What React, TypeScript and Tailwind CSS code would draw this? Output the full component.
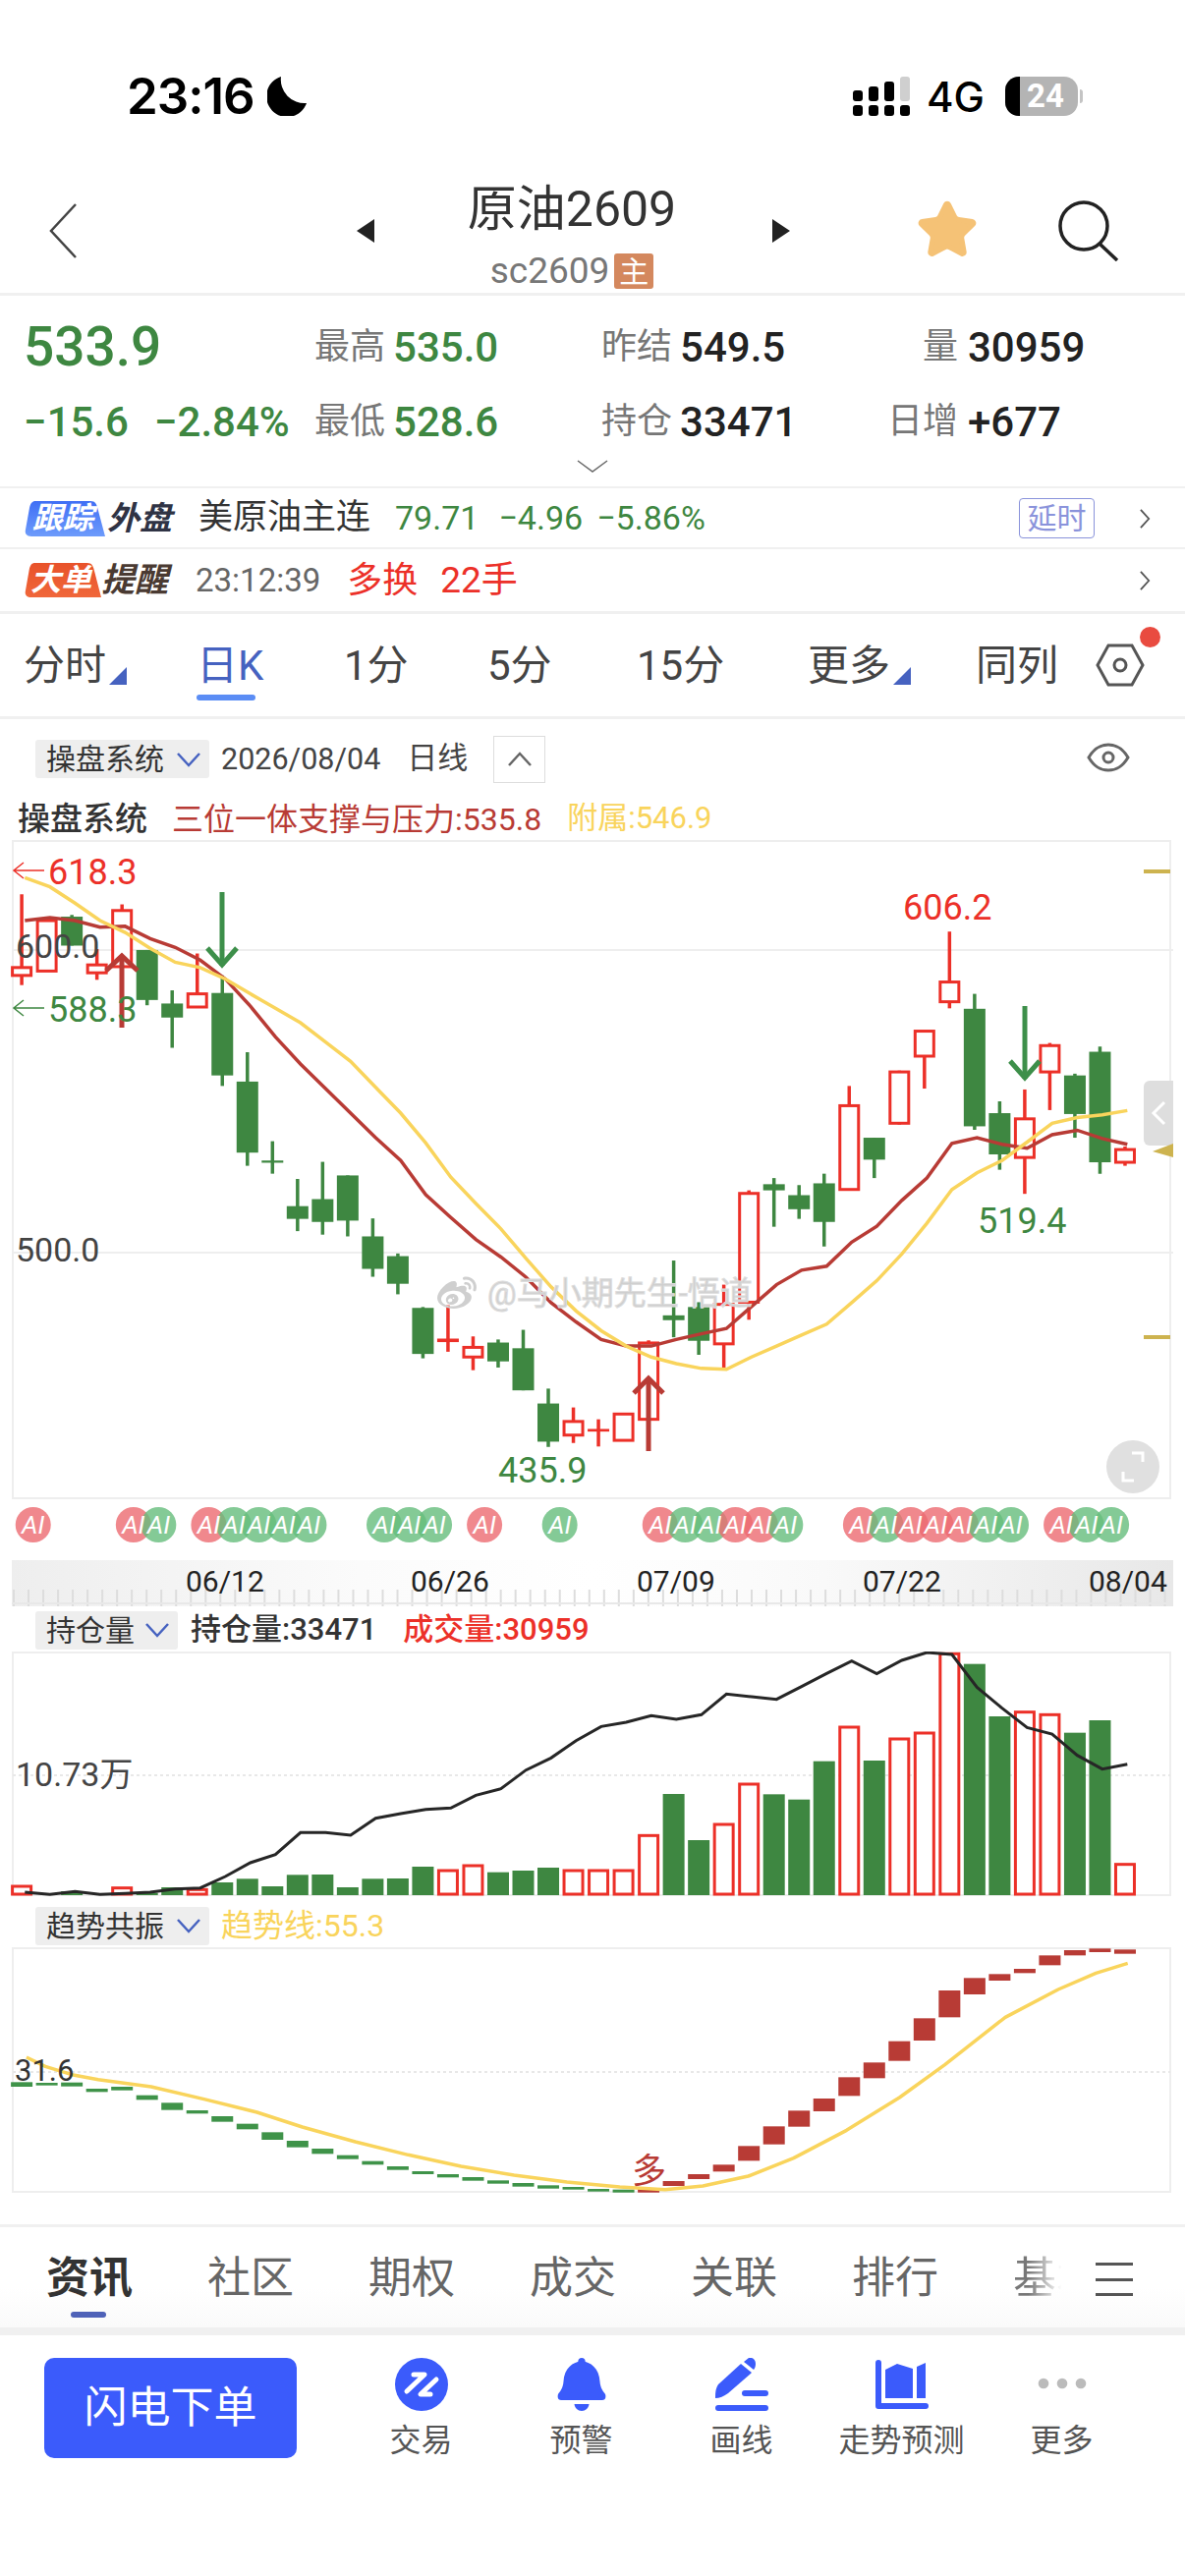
import React from "react";
import { Star } from "lucide-react";
import { FaWeibo } from "react-icons/fa";

const GREEN = "#3e8741";
const RED = "#ec3028";
const BRICK = "#b83b35";
const YELLOW = "#f9d45c";

// y values below were read off the chart, Y() maps them to page pixels
const Y = (z: number) => 850 + z / 2.24;
const VY = (z: number) => 1530 + z / 3;
const TY = (z: number) => 1930 + z / 3;
const cx = (i: number) => 22.1 + 25.52 * i;
const lx = (i: number) => 25.3 + 25.5 * i;
const aiX = (i: number) => 22 + 25.52 * (i + 0.46);

type Candle = ["r" | "g", number, number, number, number];

const CANDLES: Candle[] = [
  ["r", 135, 302, 320, 342], ["r", 195, 195, 310, 310], ["g", 182, 186, 252, 252], ["r", 260, 296, 314, 330],
  ["r", 158, 172, 300, 300], ["g", 262, 262, 376, 388], ["g", 354, 384, 416, 485], ["r", 270, 362, 392, 394],
  ["g", 320, 360, 548, 572], ["g", 495, 562, 724, 754], ["g", 698, 742, 747, 772], ["g", 784, 846, 875, 903],
  ["g", 745, 830, 882, 911], ["g", 776, 776, 879, 915], ["g", 874, 915, 989, 1007], ["g", 954, 960, 1023, 1047],
  ["g", 1076, 1078, 1183, 1193], ["r", 1072, 1148, 1156, 1178], ["r", 1143, 1168, 1190, 1220], ["g", 1150, 1157, 1200, 1214],
  ["g", 1128, 1170, 1266, 1266], ["g", 1262, 1296, 1383, 1395], ["r", 1305, 1337, 1368, 1386], ["r", 1332, 1354, 1360, 1394],
  ["r", 1320, 1320, 1380, 1380], ["r", 1152, 1158, 1332, 1332], ["g", 970, 1095, 1106, 1145], ["g", 1065, 1076, 1153, 1185],
  ["r", 1025, 1070, 1160, 1215], ["r", 810, 817, 1065, 1105], ["g", 782, 796, 810, 893], ["g", 798, 821, 853, 875],
  ["g", 772, 794, 882, 938], ["r", 572, 617, 808, 810], ["g", 690, 690, 740, 782], ["r", 537, 540, 657, 660],
  ["r", 447, 447, 504, 578], ["r", 220, 335, 380, 395], ["g", 362, 396, 664, 672], ["g", 607, 634, 728, 763],
  ["r", 580, 647, 735, 818], ["r", 474, 480, 540, 627], ["g", 544, 548, 636, 690], ["g", 482, 494, 746, 772],
  ["r", 710, 717, 746, 754],
];

const MA_RED = [195, 188, 195, 210, 208, 236, 256, 285, 328, 390, 460, 522, 578, 634, 690, 742, 820, 872, 922, 962, 1008, 1066, 1110, 1150, 1165, 1165, 1150, 1137, 1125, 1075, 1025, 992, 983, 928, 892, 833, 782, 703, 690, 705, 714, 683, 673, 692, 705];
const MA_YELLOW = [97, 118, 155, 195, 222, 258, 290, 302, 328, 362, 395, 428, 472, 516, 575, 634, 702, 780, 840, 898, 965, 1030, 1085, 1130, 1165, 1190, 1205, 1216, 1218, 1190, 1165, 1140, 1115, 1066, 1016, 955, 885, 808, 770, 742, 700, 657, 644, 638, 628];
const OI_LINE = [1188, 1195, 1186, 1195, 1192, 1188, 1178, 1175, 1140, 1098, 1073, 1006, 1006, 1014, 962, 948, 935, 931, 892, 872, 815, 778, 725, 682, 669, 649, 660, 646, 583, 591, 599, 560, 520, 482, 521, 480, 456, 462, 562, 626, 685, 705, 770, 812, 797];

const VOLUME: ["r" | "g", number][] = [
  ["r", 1170], ["r", 1195], ["g", 1185], ["r", 1195], ["r", 1175], ["g", 1190], ["g", 1173], ["r", 1180], ["g", 1158],
  ["g", 1147], ["g", 1170], ["g", 1135], ["g", 1134], ["g", 1173], ["g", 1147], ["g", 1146], ["g", 1110], ["r", 1122],
  ["r", 1107], ["g", 1127], ["g", 1122], ["g", 1113], ["r", 1122], ["r", 1122], ["r", 1122], ["r", 1015], ["g", 888],
  ["g", 1029], ["r", 981], ["r", 858], ["g", 889], ["g", 905], ["g", 788], ["r", 684], ["g", 786], ["r", 720], ["r", 702],
  ["r", 460], ["g", 491], ["g", 651], ["r", 638], ["r", 646], ["g", 701], ["g", 663], ["r", 1103],
];

const TREND: [number, number][] = [
  [568, 582], [570, 578], [569, 581], [588, 598], [582, 593], [608, 622], [631, 653], [654, 664], [672, 689], [695, 712],
  [721, 744], [747, 767], [771, 787], [791, 803], [809, 820], [825, 836], [840, 849], [849, 859], [858, 869], [868, 878],
  [876, 887], [883, 893], [888, 896], [894, 902], [896, 905], [893, 905], [870, 885], [849, 864], [820, 841], [763, 808],
  [703, 758], [655, 704], [618, 657], [553, 610], [508, 556], [443, 503], [373, 441], [288, 370], [250, 300], [238, 258],
  [222, 235], [181, 211], [165, 181], [160, 171], [163, 176],
];

const TREND_LINE = [[35, 492], [60, 520], [95, 545], [130, 560], [200, 582], [270, 620], [340, 660], [400, 705], [470, 750], [540, 790], [610, 825], [680, 852], [750, 873], [820, 888], [880, 896], [930, 885], [990, 855], [1050, 800], [1120, 715], [1190, 615], [1250, 515], [1330, 370], [1400, 285], [1450, 235], [1492, 205]];

const AI_MARKS: [number, "r" | "g"][] = [
  [0, "r"], [4, "r"], [5, "g"], [7, "r"], [8, "g"], [9, "g"], [10, "g"], [11, "g"], [14, "g"], [15, "g"], [16, "g"], [18, "r"], [21, "g"],
  [25, "r"], [26, "g"], [27, "g"], [28, "r"], [29, "r"], [30, "g"], [33, "r"], [34, "g"], [35, "r"], [36, "r"], [37, "r"], [38, "g"], [39, "g"], [41, "r"], [42, "g"], [43, "g"],
];

const polyline = (vals: number[], map: (z: number) => number) => vals.map((z, i) => `${lx(i)},${map(z)}`).join(" ");

const Chevron = ({ className = "" }: { className?: string }) => (
  <svg viewBox="0 0 26 16" className={className} fill="none" stroke="#4662c0" strokeWidth="2.5">
    <path d="M2 2l11 12L24 2" />
  </svg>
);

const Chip = ({ label, width }: { label: string; width: string }) => (
  <div className={`flex items-center justify-between h-[39px] rounded-[3px] bg-[#eeeeee] pl-[11px] pr-[8px] text-[30px] text-[#333] ${width}`}>
    <span>{label}</span>
    <Chevron className="w-[26px] h-[16px]" />
  </div>
);

const Stat = ({ label, value, color, className = "" }: { label: string; value: string; color: string; className?: string }) => (
  <div className={`flex items-center ${className}`}>
    <span className="text-[36px] text-[#777]">{label}</span>
    <span className={`ml-[8px] text-[42px] font-medium ${color}`}>{value}</span>
  </div>
);

const RowArrow = () => (
  <svg viewBox="0 0 14 24" className="w-[13px] h-[22px]" fill="none" stroke="#555" strokeWidth="2">
    <path d="M2 2l9 10-9 10" />
  </svg>
);

// rounded tag with the slanted tail on its lower right corner
const Tag = ({ label, w, h, from, to, id }: { label: string; w: number; h: number; from: string; to: string; id: string }) => (
  <span className="relative flex shrink-0 items-center justify-center pr-[4px] text-[31px] font-bold italic leading-none text-white" style={{ width: w, height: h }}>
    <svg viewBox="0 0 82 36" preserveAspectRatio="none" className="absolute inset-0 w-full h-full">
      <defs>
        <linearGradient id={id} x1="0" x2="0" y1="0" y2="1">
          <stop offset="0" stopColor={from} />
          <stop offset="1" stopColor={to} />
        </linearGradient>
      </defs>
      <path d="M11 0H67C72 0 73 3 74 6L82 36H7C2 36 0 33 1 29L5 7C6 2 8 0 11 0z" fill={`url(#${id})`} />
    </svg>
    <span className="relative">{label}</span>
  </span>
);

function MainChart() {
  return (
    <svg viewBox="0 855 1206 672" className="block w-[1206px] h-[672px]">
      <rect x="13" y="856" width="1178" height="669" fill="#fff" stroke="#eeeeee" strokeWidth="2" />
      <line x1="13" x2="1194" y1="967" y2="967" stroke="#eeeeee" strokeWidth="2" />
      <line x1="13" x2="1194" y1="1275" y2="1275" stroke="#eeeeee" strokeWidth="2" />
      <line x1="1164" x2="1191" y1="887" y2="887" stroke="#cdb34f" strokeWidth="4" />
      <line x1="1164" x2="1191" y1="1361" y2="1361" stroke="#cdb34f" strokeWidth="4" />

      {CANDLES.map(([t, hi, top, bot, lo], i) => {
        const x = cx(i);
        const color = t === "r" ? RED : GREEN;
        const flat = bot - top < 12;
        return (
          <g key={i}>
            <line x1={x} x2={x} y1={Y(hi)} y2={Y(lo)} stroke={color} strokeWidth="3.5" />
            {t === "g" || flat ? (
              <rect x={x - 11} y={Y(top)} width="22" height={Y(bot) - Y(top)} fill={color} />
            ) : (
              <rect x={x - 9.5} y={Y(top)} width="19" height={Y(bot) - Y(top)} fill="#fff" stroke={color} strokeWidth="3" />
            )}
          </g>
        );
      })}

      <polyline points={polyline(MA_RED, Y)} fill="none" stroke={BRICK} strokeWidth="3.5" />
      <polyline points={polyline(MA_YELLOW, Y)} fill="none" stroke={YELLOW} strokeWidth="3.5" />

      <g fill="none" stroke="#3d8f4a" strokeWidth="5">
        <path d="M226 908V983" />
        <path d="M211 965l15 17 15-17" />
        <path d="M1043 1024V1098" />
        <path d="M1028 1080l15 17 15-17" />
      </g>
      <g fill="none" stroke={BRICK} strokeWidth="5">
        <path d="M124 973V1046" />
        <path d="M108 988l16-15 16 15" />
        <path d="M660 1403V1477" />
        <path d="M645 1418l15-15 15 15" />
      </g>

      <g fontSize="36">
        <path d="M14 886h31M24 878l-10 8 10 8" fill="none" stroke={RED} strokeWidth="1.5" />
        <text x="49" y="900" fill={RED}>618.3</text>
        <path d="M14 1026h31M24 1018l-10 8 10 8" fill="none" stroke={GREEN} strokeWidth="1.5" />
        <text x="49" y="1040" fill={GREEN}>588.3</text>
        <text x="16" y="975" fontSize="34" fill="#444">600.0</text>
        <text x="16" y="1284" fontSize="34" fill="#444">500.0</text>
        <text x="507" y="1509" fill={GREEN}>435.9</text>
        <text x="919" y="936" fill={RED}>606.2</text>
        <text x="995" y="1255" fill={GREEN}>519.4</text>
      </g>

      <path d="M1194 1100h-24a6 6 0 0 0-6 6v54a6 6 0 0 0 6 6h24z" fill="#dedede" />
      <path d="M1185 1122l-11 11 11 11" fill="none" stroke="#fff" strokeWidth="3" />
      <path d="M1194 1164v14l-21-6z" fill="#cdb34f" />

      <circle cx="1153" cy="1493" r="27" fill="#e0e0e0" />
      <path d="M1143 1498v9h11M1163 1488v-9h-11" fill="none" stroke="#fff" strokeWidth="3" />
    </svg>
  );
}

function AiRow() {
  return (
    <svg viewBox="0 1527 1206 61" className="block w-[1206px] h-[61px]">
      {AI_MARKS.map(([i, t]) => (
        <circle key={i} cx={aiX(i)} cy="1552" r="18" fill={t === "r" ? "#ec6a70" : "#65bd7c"} fillOpacity="0.8" />
      ))}
      {AI_MARKS.map(([i]) => (
        <text key={i} x={aiX(i)} y="1561" textAnchor="middle" fontSize="26" fontStyle="italic" fill="#fff">AI</text>
      ))}
    </svg>
  );
}

function TimeAxis() {
  return (
    <div className="relative h-[47px] w-[1182px] ml-[12px] bg-[linear-gradient(90deg,#eeeeee_0%,#fbfbfb_30%,#ffffff_50%,#f9f9f9_70%,#e8e8e8_100%)]">
      <svg viewBox="12 1588 1182 47" className="block w-[1182px] h-[47px]">
        {Array.from({ length: 79 }, (_, i) => (
          <line key={i} x1={14 + 15.02 * i} x2={14 + 15.02 * i} y1="1618" y2="1635" stroke="#dddddd" strokeWidth="2" />
        ))}
        <line x1="12" x2="1194" y1="1632" y2="1632" stroke="#e8e8e8" strokeWidth="2" />
        <g fontSize="30" fill="#222">
          <text x="189" y="1620">06/12</text>
          <text x="418" y="1620">06/26</text>
          <text x="648" y="1620">07/09</text>
          <text x="878" y="1620">07/22</text>
          <text x="1108" y="1620">08/04</text>
        </g>
      </svg>
    </div>
  );
}

function VolumeChart() {
  return (
    <svg viewBox="0 1681 1206 249" className="block w-[1206px] h-[249px]">
      <rect x="13" y="1682" width="1178" height="247" fill="#fff" stroke="#eeeeee" strokeWidth="2" />
      <line x1="13" x2="1191" y1="1807" y2="1807" stroke="#e8e8e8" strokeWidth="2" strokeDasharray="3 3" />
      {VOLUME.map(([t, z], i) => {
        const x = cx(i);
        const y = VY(z);
        return t === "g" ? (
          <rect key={i} x={x - 11} y={y} width="22" height={1929 - y} fill={GREEN} />
        ) : (
          <rect key={i} x={x - 9.5} y={y} width="19" height={1928 - y} fill="#fff" stroke={RED} strokeWidth="3" />
        );
      })}
      <polyline points={polyline(OI_LINE, VY)} fill="none" stroke="#262626" strokeWidth="3" />
      <text x="16" y="1818" fontSize="34" fill="#444">10.73万</text>
    </svg>
  );
}

function TrendChart() {
  return (
    <svg viewBox="0 1982 1206 250" className="block w-[1206px] h-[250px]">
      <rect x="13" y="1983" width="1178" height="248" fill="#fff" stroke="#eeeeee" strokeWidth="2" />
      <line x1="13" x2="1191" y1="2109" y2="2109" stroke="#e8e8e8" strokeWidth="2" strokeDasharray="3 3" />
      {TREND.map(([a, b], i) => (
        <rect key={i} x={cx(i) - 11} y={TY(a)} width="22" height={TY(b) - TY(a)} fill={i < 25 ? "#3f9349" : "#b83b35"} />
      ))}
      <polyline points={TREND_LINE.map(([x, z]) => `${x / 1.3},${TY(z)}`).join(" ")} fill="none" stroke={YELLOW} strokeWidth="3.5" strokeLinejoin="round" />
      <text x="15" y="2118" fontSize="31" fill="#333">31.6</text>
      <text x="643" y="2222" fontSize="35" fill={BRICK}>多</text>
    </svg>
  );
}

const TABS = [
  { label: "分时", w: "w-[176px]", arrow: true },
  { label: "日K", w: "w-[150px]", active: true },
  { label: "1分", w: "w-[146px]" },
  { label: "5分", w: "w-[152px]" },
  { label: "15分", w: "w-[174px]" },
  { label: "更多", w: "w-[171px]", arrow: true },
  { label: "同列", w: "w-[122px]" },
];

const NAV = ["资讯", "社区", "期权", "成交", "关联", "排行"];

const ACTIONS: { label: string; icon: React.ReactNode }[] = [
  {
    label: "交易",
    icon: (
      <svg viewBox="0 0 54 54" className="w-[54px] h-[54px]">
        <circle cx="27" cy="27" r="27" fill="#3b5bfb" />
        <path d="M19 17H30L12 34M42 22L26 37H36" fill="none" stroke="#fff" strokeWidth="5" strokeLinecap="round" strokeLinejoin="round" />
      </svg>
    ),
  },
  {
    label: "预警",
    icon: (
      <svg viewBox="0 0 54 54" className="w-[54px] h-[54px]" fill="#3b5bfb">
        <circle cx="27" cy="3.6" r="3.6" />
        <path d="M27 3.5C36 3.5 45 11 45.5 24 46 31 49 34 51 37 52 40 51 43 48 43H6C3 43 2 40 3 37 5 34 8 31 8.5 24 9 11 18 3.5 27 3.5z" />
        <path d="M19.5 47H34.5C34 51 31 54 27 54S20 51 19.5 47z" />
      </svg>
    ),
  },
  {
    label: "画线",
    icon: (
      <svg viewBox="0 0 54 54" className="w-[54px] h-[54px]" fill="#3b5bfb">
        <path d="M29 4L34 0C37-1 41 1 41 6 41 9 40 11 39 12z" />
        <path d="M26 6L37 15 13 36C9 39 4 41 0 41 0 36 0 32 3 27z" />
        <rect x="27" y="33" width="27" height="6" rx="3" />
        <rect x="0" y="48" width="54" height="6" rx="3" />
      </svg>
    ),
  },
  {
    label: "走势预测",
    icon: (
      <svg viewBox="0 0 54 54" className="w-[54px] h-[54px]" fill="#3b5bfb">
        <path d="M0 5a3 3 0 0 1 6 0V46H51a3 3 0 0 1 0 6H3a3 3 0 0 1-3-3z" />
        <path d="M10 12L22 6 38 11V41H10zM42 9L51 5V41H42z" />
      </svg>
    ),
  },
  {
    label: "更多",
    icon: (
      <svg viewBox="0 0 54 54" className="w-[54px] h-[54px]" fill="#bbbbbb">
        <circle cx="8" cy="26" r="5.3" />
        <circle cx="27" cy="26" r="5.3" />
        <circle cx="46" cy="26" r="5.3" />
      </svg>
    ),
  },
];

export default function App() {
  return (
    <div className="w-[1206px] h-[2622px] overflow-hidden bg-white text-[#333] font-[Roboto,'Noto_Sans_CJK_SC',sans-serif]">
      {/* status bar */}
      <div className="h-[180px] flex justify-between pt-[70px] pl-[129px] pr-[104px]">
        <div className="flex items-center h-[56px] gap-[13px] text-black">
          <span className="font-['Inter'] text-[51px] font-semibold tracking-[-1px] text-black">23:16</span>
          <svg viewBox="0 0 40 40" className="w-[40px] h-[40px]" fill="#000">
            <path d="M14 0A21 21 0 1 0 40 27 24 24 0 0 1 14 0z" />
          </svg>
        </div>
        <div className="flex items-center h-[56px]">
          <svg viewBox="865 77 58 40" className="w-[58px] h-[40px]" fill="#000">
            <rect x="865" y="91" width="10" height="11" rx="3" />
            <rect x="881" y="87" width="10" height="15" rx="3" />
            <rect x="897" y="82" width="10" height="20" rx="3" />
            <rect x="913" y="77" width="10" height="25" rx="3" fill="#cfcfcf" />
            <rect x="865" y="106" width="10" height="11" rx="3" />
            <rect x="881" y="106" width="10" height="11" rx="3" />
            <rect x="897" y="106" width="10" height="11" rx="3" />
            <rect x="913" y="106" width="10" height="11" rx="3" />
          </svg>
          <span className="ml-[17px] font-['Inter'] text-[42px] font-medium text-black">4G</span>
          <div className="ml-[21px] flex items-center">
            <div className="relative h-[40px] w-[74px] overflow-hidden rounded-[14px] bg-[#b4b4b4]">
              <div className="h-full w-[15px] bg-black" />
              <span className="absolute inset-0 flex items-center justify-center pl-[8px] text-[33px] font-bold text-white">24</span>
            </div>
            <div className="ml-[2px] h-[14px] w-[3px] rounded-r-full bg-[#c4c4c4]" />
          </div>
        </div>
      </div>

      {/* title bar */}
      <div className="relative h-[121px] border-b-[3px] border-[#f0f0f0]">
        <svg viewBox="0 0 30 56" className="absolute left-[49px] top-[27px] w-[30px] h-[56px]" fill="none" stroke="#444" strokeWidth="2.5">
          <path d="M28 1L3 28l25 27" />
        </svg>
        <svg viewBox="0 0 18 24" className="absolute left-[363px] top-[43px] w-[18px] h-[24px]" fill="#222">
          <path d="M18 0v24L0 12z" />
        </svg>
        <svg viewBox="0 0 18 24" className="absolute left-[786px] top-[43px] w-[18px] h-[24px]" fill="#222">
          <path d="M0 0v24l18-12z" />
        </svg>
        <div className="flex flex-col items-center pr-[42px]">
          <div className="mt-[3px] text-[50px] leading-[60px] text-[#333]">原油2609</div>
          <div className="flex items-center gap-[5px] mt-[15px] h-[36px]">
            <span className="text-[37px] text-[#777]">sc2609</span>
            <span className="flex h-[36px] w-[40px] items-center justify-center rounded-[3px] bg-[#d4885e] text-[30px] text-white">主</span>
          </div>
        </div>
        <Star className="absolute left-[932px] top-[22px] w-[64px] h-[64px]" fill="#f5c276" stroke="#f5c276" strokeWidth={2} />
        <svg viewBox="0 0 62 62" className="absolute left-[1077px] top-[24px] w-[62px] h-[62px]" fill="none" stroke="#222" strokeWidth="3.5">
          <circle cx="26" cy="26" r="24" />
          <path d="M42 44l18 17" />
        </svg>
      </div>

      {/* quote */}
      <div className="relative h-[196px] border-b-2 border-[#f0f0f0] pl-[24px]">
        <div className="flex h-[92px] items-center pt-[12px]">
          <div className="w-[296px] text-[55px] font-medium text-[#3e8741]">533.9</div>
          <Stat className="w-[292px]" label="最高" value="535.0" color="text-[#3e8741]" />
          <Stat className="w-[291px]" label="昨结" value="549.5" color="text-[#222]" />
          <div className="flex items-center">
            <span className="w-[72px] whitespace-nowrap text-right text-[36px] text-[#777]">量</span>
            <span className="ml-[10px] text-[42px] font-medium text-[#222]">30959</span>
          </div>
        </div>
        <div className="flex h-[64px] items-center pt-[8px]">
          <div className="flex w-[296px] gap-[26px] text-[42px] font-medium text-[#3e8741]">
            <span>−15.6</span>
            <span>−2.84%</span>
          </div>
          <Stat className="w-[292px]" label="最低" value="528.6" color="text-[#3e8741]" />
          <Stat className="w-[291px]" label="持仓" value="33471" color="text-[#222]" />
          <div className="flex items-center">
            <span className="w-[72px] whitespace-nowrap text-right text-[36px] text-[#777]">日增</span>
            <span className="ml-[10px] text-[42px] font-medium text-[#222]">+677</span>
          </div>
        </div>
        <svg viewBox="0 0 32 13" className="absolute left-[587px] top-[167px] w-[32px] h-[13px]" fill="none" stroke="#666" strokeWidth="1.5">
          <path d="M1 1l15 11L31 1" />
        </svg>
      </div>

      {/* foreign market row */}
      <div className="flex h-[62px] items-center border-b-2 border-[#f0f0f0] pl-[25px] pr-[34px] pt-[1px]">
        <Tag label="跟踪" w={82} h={36} from="#3f6ff5" to="#6d9bfb" id="tag-blue" />
        <span className="ml-[2px] text-[33px] font-bold italic text-[#2f3344]">外盘</span>
        <span className="ml-[27px] text-[35px] text-[#333]">美原油主连</span>
        <span className="ml-[25px] text-[34px] text-[#3e8741]">79.71</span>
        <span className="ml-[20px] text-[34px] text-[#3e8741]">−4.96</span>
        <span className="ml-[14px] text-[34px] text-[#3e8741]">−5.86%</span>
        <span className="ml-auto flex h-[41px] w-[77px] items-center justify-center rounded-[4px] border border-[#8a93db] text-[30px] text-[#8a93db]">延时</span>
        <span className="ml-[45px]"><RowArrow /></span>
      </div>

      {/* big order row */}
      <div className="flex h-[63px] items-center pl-[25px] pr-[34px]">
        <Tag label="大单" w={78} h={35} from="#e8522a" to="#f0673a" id="tag-orange" />
        <span className="text-[34px] font-bold italic text-[#4a3a32]">提醒</span>
        <span className="ml-[28px] text-[33px] text-[#666]">23:12:39</span>
        <span className="ml-[27px] text-[36px] text-[#ec3028]">多换</span>
        <span className="ml-[23px] text-[37px] text-[#ec3028]">22手</span>
        <span className="ml-auto"><RowArrow /></span>
      </div>

      {/* period tabs */}
      <div className="relative flex h-[110px] items-center border-y-[3px] border-[#f0f0f0] pl-[24px]">
        {TABS.map((t) => (
          <div key={t.label} className={`relative text-[42px] ${t.w} ${t.active ? "text-[#4662c0]" : "text-[#444]"}`}>
            <span className="leading-[52px]">{t.label}</span>
            {t.arrow && (
              <svg viewBox="0 0 18 18" className="absolute left-[87px] top-[33px] w-[18px] h-[18px]" fill="#4662c0">
                <path d="M18 0v18H0z" />
              </svg>
            )}
            {t.active && <div className="absolute left-0 top-[61px] h-[6px] w-[60px] rounded-full bg-[#5b8df5]" />}
          </div>
        ))}
        <svg viewBox="0 0 50 44" className="w-[50px] h-[44px]" fill="none" stroke="#555" strokeWidth="3">
          <path d="M13 2h24l11 20-11 20H13L2 22z" />
          <circle cx="25" cy="22" r="6" />
        </svg>
        <div className="absolute left-[1160px] top-[13px] h-[21px] w-[21px] rounded-full bg-[#e94b40]" />
      </div>

      {/* chart toolbar */}
      <div className="relative flex h-[80px] items-center pl-[36px] pt-[1px]">
        <Chip label="操盘系统" width="w-[177px]" />
        <span className="ml-[12px] text-[30.5px] text-[#444]">2026/08/04</span>
        <span className="ml-[27px] text-[31px] text-[#444]">日线</span>
        <span className="ml-[26px] flex h-[48px] w-[53px] items-center justify-center border border-[#dddddd]">
          <svg viewBox="0 0 26 16" className="w-[26px] h-[16px]" fill="none" stroke="#666" strokeWidth="2.5">
            <path d="M2 14L13 2l11 12" />
          </svg>
        </span>
        <svg viewBox="0 0 44 30" className="absolute left-[1106px] top-[24px] w-[44px] h-[30px]" fill="none" stroke="#666" strokeWidth="3">
          <path d="M2 15C8 5 14 2 22 2s14 3 20 13c-6 10-12 13-20 13S8 25 2 15z" />
          <circle cx="22" cy="15" r="5" />
        </svg>
      </div>

      {/* indicator legend */}
      <div className="flex h-[43px] items-center pl-[18px]">
        <span className="text-[33px] font-medium text-[#333]">操盘系统</span>
        <span className="ml-[25px] text-[32px] text-[#b83b35]">三位一体支撑与压力:535.8</span>
        <span className="ml-[26px] text-[31px] text-[#f9d45c]">附属:546.9</span>
      </div>

      <div className="relative">
        <MainChart />
        <div className="absolute left-[442px] top-[437px] flex items-center gap-[8px] text-[#cfcfcf]">
          <FaWeibo className="w-[46px] h-[40px]" />
          <span className="text-[33px] [-webkit-text-stroke:1px_#dddddd]">@马小期先生-悟道</span>
        </div>
      </div>
      <AiRow />
      <TimeAxis />

      <div className="flex h-[46px] items-center pl-[36px] pt-[2px]">
        <Chip label="持仓量" width="w-[145px]" />
        <span className="ml-[13px] text-[31px] font-medium text-[#333]">持仓量:33471</span>
        <span className="ml-[27px] text-[31px] font-medium text-[#ec3028]">成交量:30959</span>
      </div>
      <VolumeChart />

      <div className="flex h-[52px] items-center pl-[36px] pt-[8px]">
        <Chip label="趋势共振" width="w-[177px]" />
        <span className="ml-[12px] text-[32px] text-[#f9d45c]">趋势线:55.3</span>
      </div>
      <TrendChart />

      {/* bottom tabs */}
      <div className="relative mt-[32px] flex h-[113px] items-start border-t-[3px] border-b-[8px] border-[#f0f0f0] bg-[linear-gradient(180deg,#ffffff_60%,#fafafa_100%)] pl-[47px] pt-[23px]">
        <div className="flex gap-[76px]">
          {NAV.map((n, i) => (
            <span key={n} className={`text-[44px] leading-[58px] ${i === 0 ? "font-bold text-[#333]" : "text-[#666]"}`}>{n}</span>
          ))}
          <span className="w-[52px] overflow-hidden whitespace-nowrap bg-[linear-gradient(90deg,#777_30%,#ffffff_95%)] bg-clip-text text-[44px] leading-[58px] text-transparent">基本</span>
        </div>
        <div className="absolute left-[1115px] top-[36px] flex h-[34px] w-[38px] flex-col justify-between">
          <div className="h-[3px] bg-[#555]" />
          <div className="h-[3px] bg-[#555]" />
          <div className="h-[3px] bg-[#555]" />
        </div>
        <div className="absolute left-[72px] top-[86px] h-[6px] w-[36px] rounded-full bg-[#4f62b8]" />
      </div>

      {/* action bar */}
      <div className="flex items-start pl-[45px] pt-[23px]">
        <div className="flex h-[102px] w-[257px] items-center justify-center rounded-[10px] bg-[#3b5bfb] text-[44px] text-white">闪电下单</div>
        <div className="ml-[45px] flex">
          {ACTIONS.map((a) => (
            <div key={a.label} className="flex w-[163px] flex-col items-center">
              {a.icon}
              <span className="mt-[8px] text-[32px] leading-[44px] text-[#555]">{a.label}</span>
            </div>
          ))}
        </div>
      </div>
    </div>
  );
}
